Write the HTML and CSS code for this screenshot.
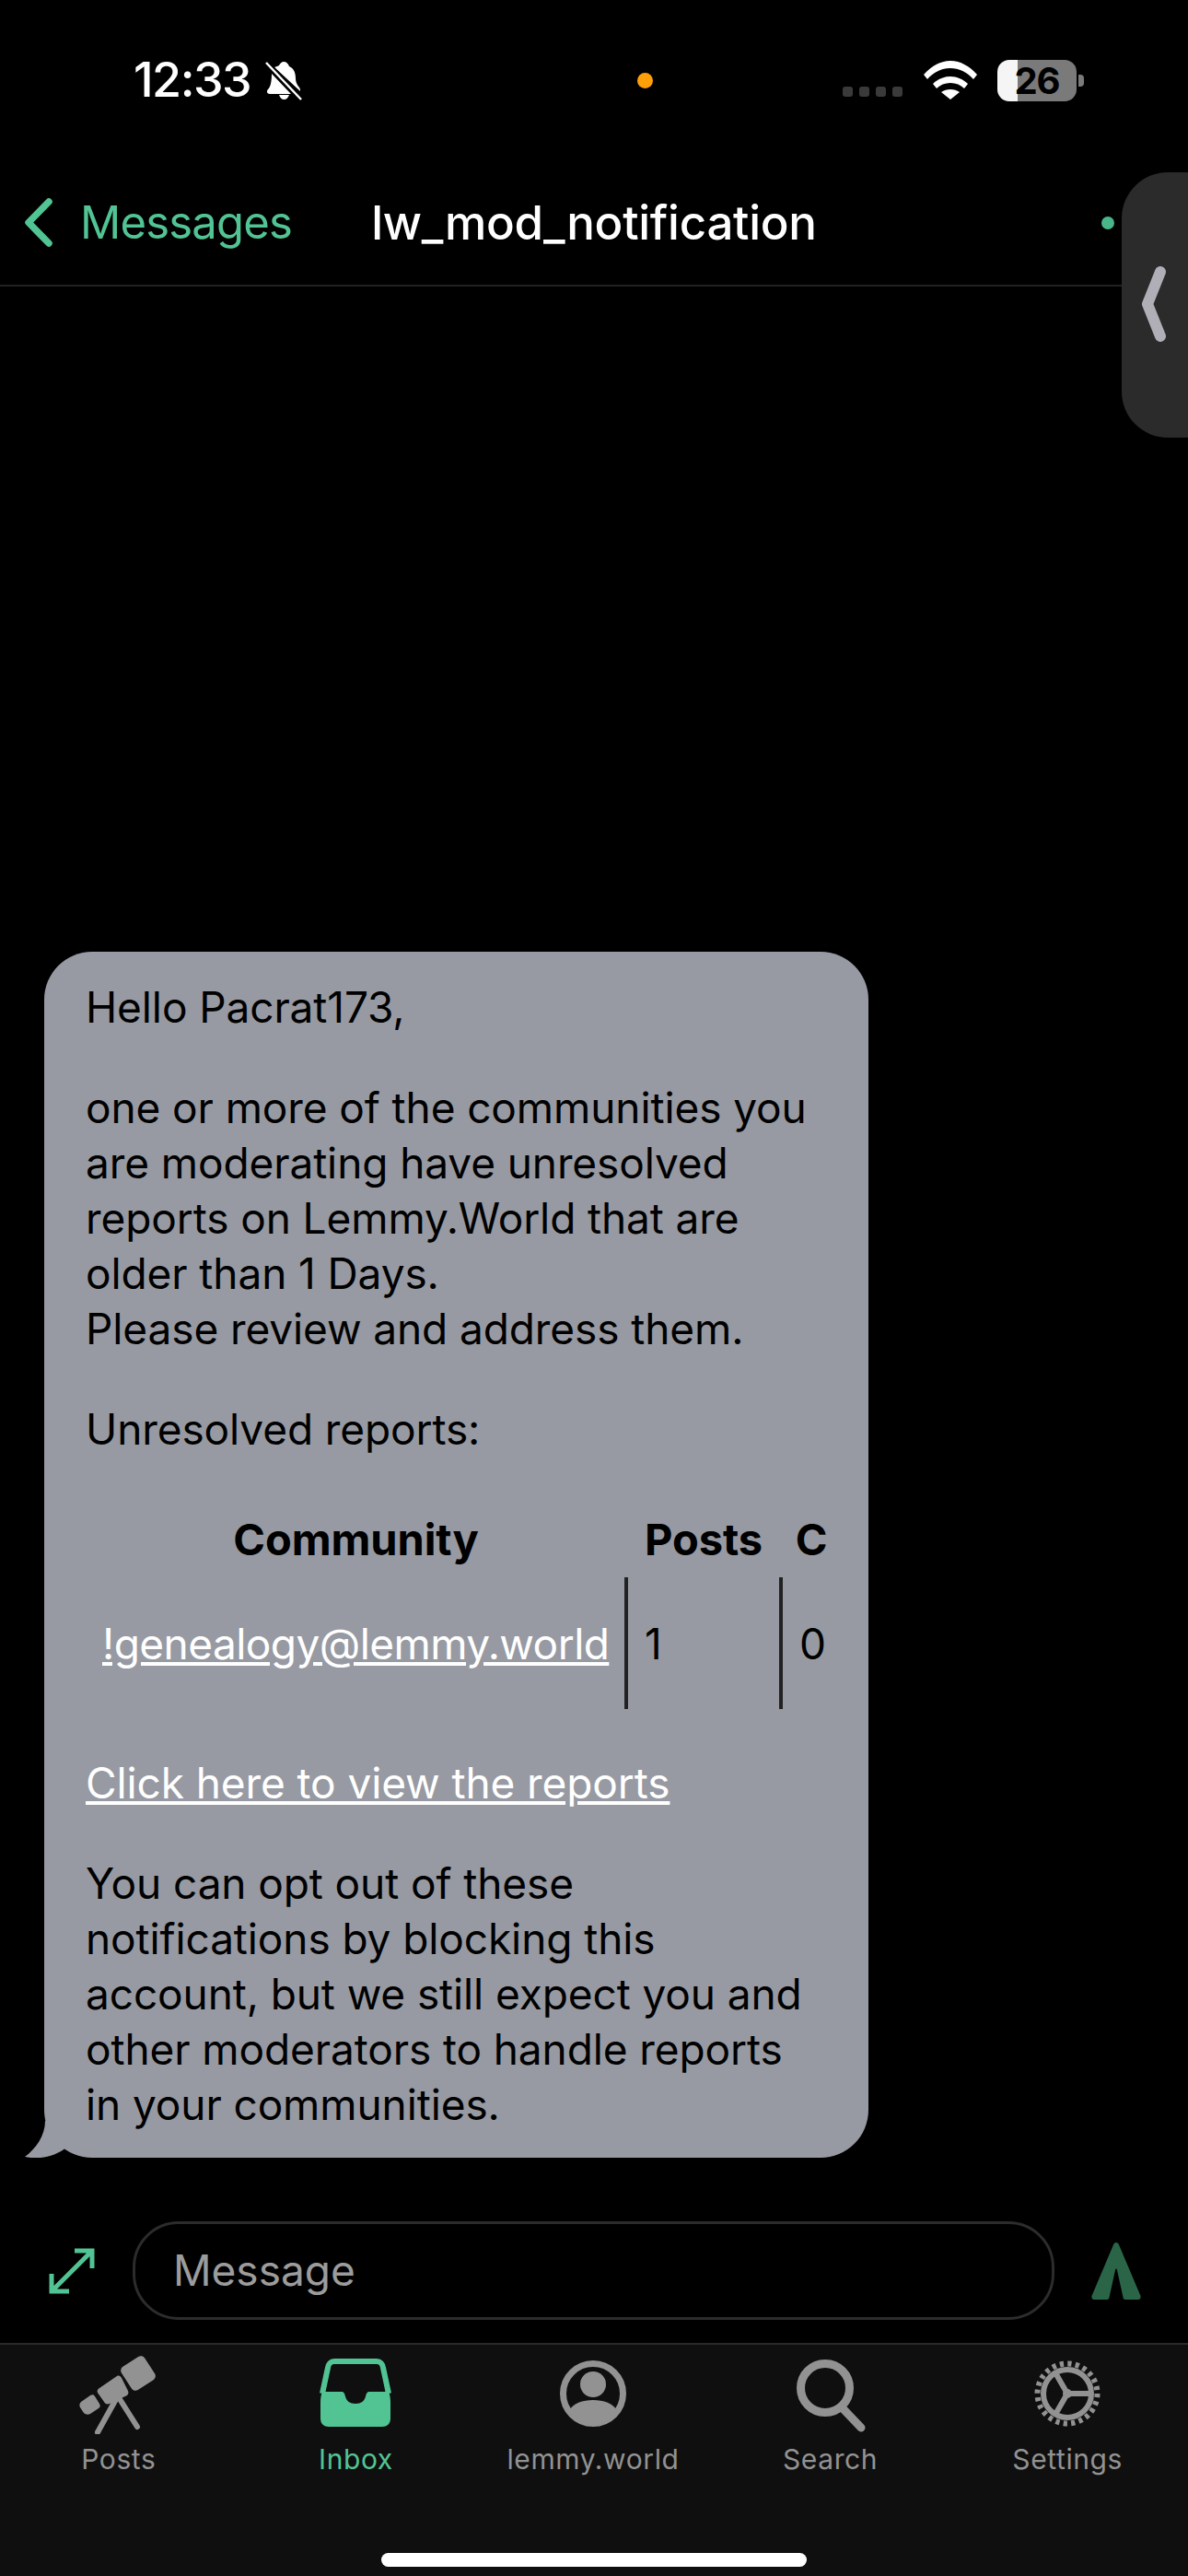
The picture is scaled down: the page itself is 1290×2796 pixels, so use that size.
FILE: index.html
```html
<!DOCTYPE html>
<html lang="en">
<head>
    <meta charset="UTF-8">
    <meta name="viewport" content="width=device-width, initial-scale=1.0">
    <title>lw_mod_notification</title>
    <link rel="stylesheet" href="styles.css">
</head>
<body>
<div class="app">
    <div class="status-bar">
        <span class="time">12:33</span>
        <svg class="bell" viewBox="0 0 41 43">
            <path d="M20 1c3 0 5 2 6 5 5 2 7 7 7 13 0 3 1 7 4 10 1 1 1 3 1 4L10 7c2-1 4-1 5-2 1-2 3-4 5-4zM7 14l21 22H5c-3 0-4-3-2-5 3-3 4-9 4-17zM15 37h11c-1 3-3 5-5.500 5S16 40 15 37z" fill="#fff"/>
            <path d="M2 3l36 38" stroke="#000" stroke-width="6"/>
            <path d="M1 2l38 40" stroke="#fff" stroke-width="2.500"/>
        </svg>
        <span class="camera-dot"></span>
        <div class="status-right">
            <div class="cell-dots"><i></i><i></i><i></i><i></i></div>
            <svg class="wifi" viewBox="0 0 58 42">
                <path d="M0 15C8 6 18 0 29 0s21 6 29 15l-4 5C47 12 38 8 29 8S11 12 4 20z" fill="#fff"/>
                <path d="M10 25c5-5 12-8 19-8s14 3 19 8l-4 5c-4-4-9-6-15-6s-11 2-15 6z" fill="#fff"/>
                <path d="M19 34c3-2 6-3 10-3s7 1 10 3L29 42z" fill="#fff"/>
            </svg>
            <div class="battery"><span class="battery-level">26</span></div>
            <span class="battery-nub"></span>
        </div>
    </div>

    <div class="nav-bar">
        <a class="back">
            <svg class="back-icon" viewBox="0 0 31 53">
                <path d="M27 4L5 26.500 27 49" fill="none" stroke="#52c494" stroke-width="7.500" stroke-linecap="round" stroke-linejoin="round"/>
            </svg>
            Messages
        </a>
        <div class="nav-title">lw_mod_notification</div>
        <div class="nav-right"><span class="green-dot"></span></div>
    </div>

    <div class="thread">
        <div class="bubble">
            <p>Hello Pacrat173,</p>
            <p>one or more of the communities you are moderating have unresolved reports on Lemmy.World that are older than 1 Days.<br>Please review and address them.</p>
            <p>Unresolved reports:</p>
            <table>
                <tr>
                    <th class="col-community">Community</th>
                    <th class="col-posts">Posts</th>
                    <th class="col-c">C</th>
                </tr>
                <tr>
                    <td class="col-community"><a>!genealogy@lemmy.world</a></td>
                    <td class="col-posts">1</td>
                    <td class="col-c">0</td>
                </tr>
            </table>
            <p><a>Click here to view the reports</a></p>
            <p>You can opt out of these notifications by blocking this account, but we still expect you and other moderators to handle reports in your communities.</p>
            <svg class="bubble-tail" viewBox="0 0 80 40">
                <path d="M22 0C22 16 12 30 0 39c14 3 32 1 46-11 8 7 20 12 34 12L80 0z" fill="#979aa2"/>
            </svg>
        </div>
    </div>

    <div class="composer">
        <svg class="expand" viewBox="0 0 50 50">
            <path d="M3 47L47 3M28 3h19v19M3 28v19h19" fill="none" stroke="#52c494" stroke-width="5"/>
        </svg>
        <div class="input">Message</div>
        <svg class="send" viewBox="0 0 54 62">
            <path d="M27 0c1.500 0 2.500 1 3 2.500L53.500 58c.5 2-.5 4-2.500 4H37c-1.500 0-2.500-1-2.500-2.500L28 30c-.3-2-1.700-2-2 0L19.500 59.500c0 1.500-1 2.500-2.500 2.500H3c-2 0-3-2-2.500-4L24 2.500C24.500 1 25.500 0 27 0z" fill="#2a6548"/>
        </svg>
    </div>

    <div class="tab-bar">
        <div class="tabs">
            <div class="tab">
                <svg class="tab-icon" viewBox="0 0 86 86">
                    <g fill="#929292">
                        <rect x="49" y="5" width="30" height="30" rx="5" transform="rotate(-33 64 20)"/>
                        <path d="M22 36l19-13c2-1 4 0 5 2l7 14c1 2 0 4-1 5l-19 9c-3 1-5 0-6-2l-7-10c-1-2 0-4 2-5z" />
                        <path d="M2 51l10-7c2-1 4-1 5 1l5 8c1 2 1 4-1 5l-9 6c-2 1-5 1-7-1l-4-6c-1-2-1-4 1-6z"/>
                    </g>
                    <path d="M40 48L20 84M44 48L63 78" fill="none" stroke="#929292" stroke-width="6" stroke-linecap="round"/>
                </svg>
                <span>Posts</span>
            </div>
            <div class="tab tab-active">
                <svg class="tab-icon" viewBox="0 0 80 86">
                    <path d="M4 42L10 14c.5-4 3-7 7-7h46c4 0 6.500 3 7 7l6 28" fill="none" stroke="#52c494" stroke-width="6"/>
                    <path d="M2 51c0-5 1-9 2-11h20c4 0 4 2 5 5 1 5 5 8 11 8s10-3 11-8c1-3 1-5 5-5h20c1 2 2 6 2 11v18c0 6-4 9-9 9H11c-5 0-9-3-9-9z" fill="#52c494"/>
                </svg>
                <span>Inbox</span>
            </div>
            <div class="tab">
                <svg class="tab-icon" viewBox="0 0 86 86">
                    <circle cx="43" cy="42" r="32.500" fill="none" stroke="#929292" stroke-width="7"/>
                    <circle cx="43" cy="32" r="14" fill="#929292"/>
                    <path d="M16 62c5-10 16-13 27-13s22 3 27 13c-7 8-16 12-27 12s-20-4-27-12z" fill="#929292"/>
                </svg>
                <span>lemmy.world</span>
            </div>
            <div class="tab">
                <svg class="tab-icon" viewBox="0 0 86 86">
                    <circle cx="37" cy="36" r="26.500" fill="none" stroke="#929292" stroke-width="9"/>
                    <path d="M56 58l20 21" fill="none" stroke="#929292" stroke-width="9" stroke-linecap="round"/>
                </svg>
                <span>Search</span>
            </div>
            <div class="tab">
                <svg class="tab-icon" viewBox="0 0 86 86">
                    <circle cx="43" cy="42" r="32.500" fill="none" stroke="#929292" stroke-width="6" stroke-dasharray="4.250 4.260"/>
                    <circle cx="43" cy="42" r="26" fill="none" stroke="#929292" stroke-width="6"/>
                    <path d="M43 42h26M43 42L30 19.500M43 42L30 64.500" fill="none" stroke="#929292" stroke-width="6"/>
                    <circle cx="43" cy="42" r="5" fill="#929292"/>
                </svg>
                <span>Settings</span>
            </div>
        </div>
        <div class="home-indicator"></div>
    </div>

    <!-- side handle floats over the nav bar -->
    <div class="side-handle">
        <svg class="side-chevron" viewBox="0 0 27 82">
            <path d="M20 6L6 41l14 35" fill="none" stroke="#b0aeb6" stroke-width="12" stroke-linecap="round" stroke-linejoin="round"/>
        </svg>
    </div>
</div>
</body>
</html>
```

FILE: styles.css
```css
body {
    margin: 0;
    background-color: #000;
    font-family: Inter, 'Liberation Sans', sans-serif;
    color: #000;
}
svg {
    display: block;
    flex: none;
}
.app {
    position: relative;
    display: flex;
    flex-direction: column;
    width: 1290px;
    height: 2796px;
    overflow: hidden;
}

/* status bar */
.status-bar {
    display: flex;
    align-items: center;
    height: 174px;
    padding: 0 113px 0 145px;
    box-sizing: border-box;
}
.time {
    color: #fff;
    font-size: 52px;
    font-weight: 500;
    letter-spacing: -1.500px;
    line-height: 44px;
}
.bell {
    width: 41px;
    height: 43px;
    margin-left: 16px;
}
.camera-dot {
    width: 17px;
    height: 17px;
    border-radius: 50%;
    background-color: #ff9f0a;
    margin-left: 363px;
}
.status-right {
    display: flex;
    align-items: center;
    margin-left: auto;
}
.cell-dots {
    display: flex;
    gap: 7px;
    margin-top: 24px;
}
.cell-dots i {
    width: 11px;
    height: 11px;
    border-radius: 3px;
    background-color: #3a3a3a;
}
.wifi {
    width: 58px;
    height: 42px;
    margin-left: 23px;
}
.battery {
    width: 86px;
    height: 45px;
    margin-left: 22px;
    border-radius: 13px;
    background: linear-gradient(90deg, #f5f5f5 26%, #7a7a7a 26%);
    text-align: center;
}
.battery-level {
    font-size: 40px;
    font-weight: 700;
    line-height: 45px;
    letter-spacing: -1px;
}
.battery-nub {
    width: 6px;
    height: 13px;
    margin-left: 2px;
    border-radius: 0 4px 4px 0;
    background-color: #7a7a7a;
}

/* nav bar */
.nav-bar {
    display: grid;
    grid-template-columns: 1fr auto 1fr;
    align-items: center;
    height: 135px;
    border-bottom: 2px solid #222;
}
.back {
    display: flex;
    align-items: center;
    gap: 30px;
    padding-left: 26px;
    color: #52c494;
    font-size: 49px;
    letter-spacing: -.8px;
}
.back-icon {
    width: 31px;
    height: 53px;
}
.nav-title {
    color: #fff;
    font-size: 51px;
    font-weight: 500;
    letter-spacing: -.25px;
}
.nav-right {
    display: flex;
    justify-content: flex-end;
    padding-right: 80px;
}
.green-dot {
    width: 14px;
    height: 14px;
    border-radius: 50%;
    background-color: #4ab588;
}
.side-handle {
    position: absolute;
    top: 187px;
    right: 0;
    display: flex;
    align-items: center;
    width: 72px;
    height: 288px;
    padding-left: 22px;
    box-sizing: border-box;
    border-radius: 50px 0 0 50px;
    background-color: #2c2b2b;
}
.side-chevron {
    width: 27px;
    height: 82px;
    margin-top: -2px;
}

/* message thread */
.thread {
    flex: 1;
    display: flex;
    align-items: flex-end;
    padding: 0 0 69px 48px;
}
.bubble {
    position: relative;
    box-sizing: border-box;
    width: 895px;
    padding: 30px 46px 28px 45px;
    border-radius: 52px;
    background-color: #979aa2;
    font-size: 46px;
    line-height: 60px;
    letter-spacing: -.1px;
}
.bubble p {
    margin: 0 0 49px;
}
.bubble p:last-of-type {
    margin-bottom: 0;
}
.bubble a {
    color: #fff;
    text-decoration: underline;
}
.bubble-tail {
    position: absolute;
    left: -21px;
    bottom: 0;
    width: 80px;
    height: 40px;
}
table {
    width: 821px;
    margin-bottom: 50px;
    border-collapse: collapse;
    table-layout: fixed;
}
th {
    height: 82px;
    padding: 0;
    font-size: 47px;
    font-weight: 700;
    text-align: center;
}
td {
    height: 143px;
    padding: 0 18px;
}
.col-community {
    width: 587px;
    text-align: center;
}
.col-community a {
    letter-spacing: -.55px;
}
.col-posts {
    width: 168px;
}
.col-c {
    width: 66px;
}
td.col-posts,
td.col-c {
    border-left: 4px solid #222;
    text-align: left;
}

/* composer */
.composer {
    display: flex;
    align-items: center;
    height: 107px;
    padding-bottom: 25px;
}
.expand {
    width: 50px;
    height: 50px;
    margin-left: 53px;
}
.input {
    box-sizing: border-box;
    width: 1001px;
    height: 107px;
    margin-left: 41px;
    padding-left: 41px;
    border: 3px solid #2c2c2c;
    border-radius: 50px;
    color: #9c9c9c;
    font-size: 46px;
    line-height: 101px;
}
.send {
    width: 54px;
    height: 62px;
    margin-left: 40px;
}

/* tab bar */
.tab-bar {
    height: 253px;
    box-sizing: border-box;
    border-top: 2px solid #2a2a2a;
    background-color: #0f0f0f;
    padding-top: 11px;
}
.tabs {
    display: grid;
    grid-template-columns: repeat(5, 1fr);
    padding-right: 2px;
}
.tab {
    display: flex;
    flex-direction: column;
    align-items: center;
    color: #929292;
    font-size: 30px;
    line-height: 36px;
    letter-spacing: .6px;
}
.tab-active {
    color: #52c494;
}
.tab-icon {
    height: 86px;
    margin-bottom: 9px;
}
.home-indicator {
    width: 462px;
    height: 15px;
    margin: 84px auto 0;
    border-radius: 8px;
    background-color: #fff;
}
```
